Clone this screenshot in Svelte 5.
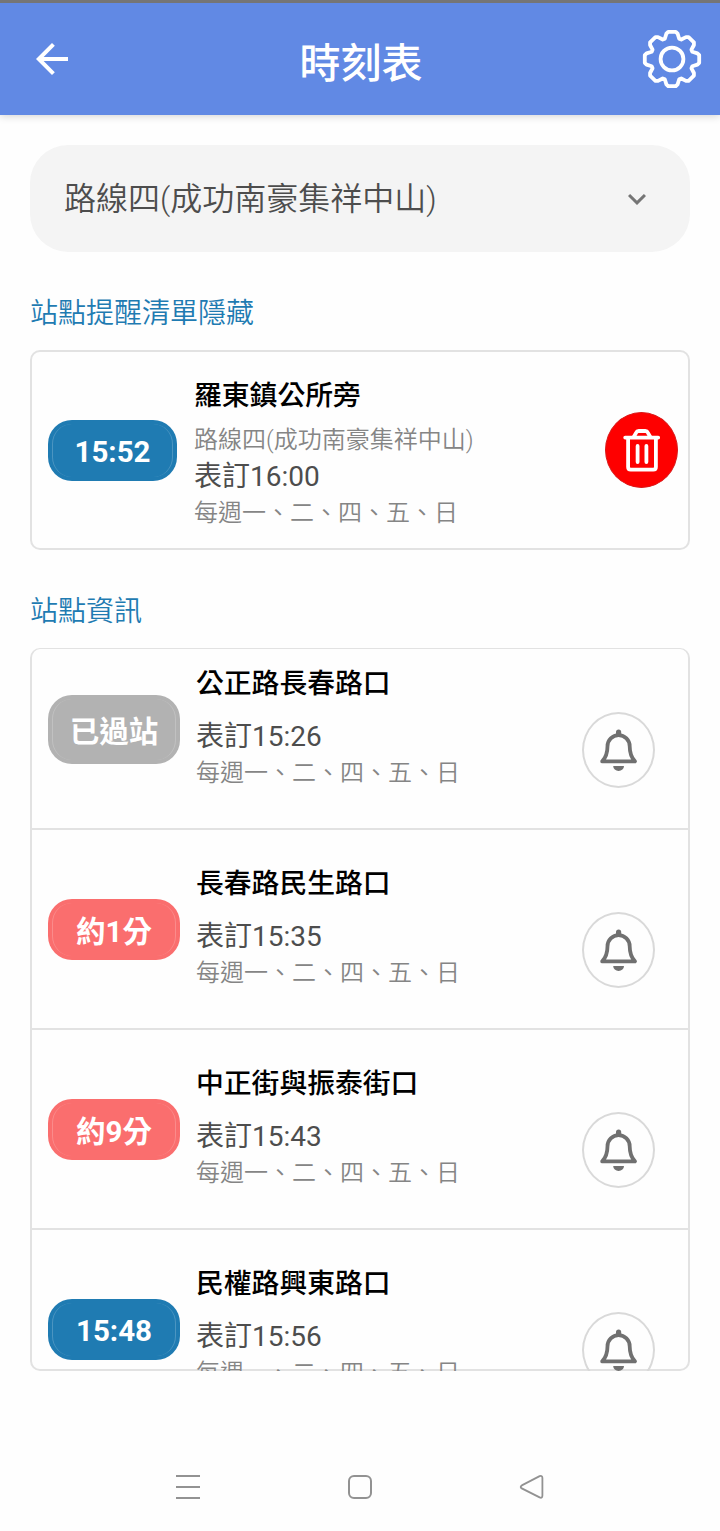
<script>
  let route = "路線四(成功南豪集祥中山)"
  const days = "每週一、二、四、五、日"

  let reminders = [
    { time: "15:52", name: "羅東鎮公所旁", route, scheduled: "16:00" }
  ]

  let stops = [
    { status: "已過站", kind: "passed", name: "公正路長春路口", scheduled: "15:26" },
    { status: "約1分", kind: "soon", name: "長春路民生路口", scheduled: "15:35" },
    { status: "約9分", kind: "soon", name: "中正街與振泰街口", scheduled: "15:43" },
    { status: "15:48", kind: "time", name: "民權路興東路口", scheduled: "15:56" }
  ]

  // eight teeth around the centre of a 60x60 box
  function gearPath() {
    const tooth = [[-7.2, -20.3], [-5.6, -25.4], [-3.8, -27.2], [3.8, -27.2], [5.6, -25.4], [7.2, -20.3]]
    let points = []
    for (let i = 0; i < 8; i++) {
      const a = (i * Math.PI) / 4
      for (const [x, y] of tooth) {
        const px = 30 + x * Math.cos(a) - y * Math.sin(a)
        const py = 30 + x * Math.sin(a) + y * Math.cos(a)
        points.push(px.toFixed(2) + " " + py.toFixed(2))
      }
    }
    return "M" + points.join("L") + "Z"
  }
</script>

<div class="screen">
  <header>
    <button class="back" aria-label="back">
      <svg width="48" height="48" viewBox="0 0 24 24"><path fill="#fff" d="M20 11H7.83l5.59-5.59L12 4l-8 8 8 8 1.41-1.41L7.83 13H20v-2z" /></svg>
    </button>
    <h1>時刻表</h1>
    <button class="settings" aria-label="settings">
      <svg width="60" height="60" viewBox="0 0 60 60" fill="none" stroke="#fff" stroke-width="3.8" stroke-linejoin="round">
        <path d={gearPath()} />
        <circle cx="30" cy="30" r="11.4" />
      </svg>
    </button>
  </header>

  <main>
    <button class="route-select">
      <span>{route}</span>
      <svg width="36" height="36" viewBox="0 0 24 24"><path fill="#757575" d="M7.41 8.59L12 13.17l4.59-4.58L18 10l-6 6-6-6z" /></svg>
    </button>

    <h2>站點提醒清單隱藏</h2>
    {#each reminders as item}
      <div class="card">
        <div class="pill time">{item.time}</div>
        <div class="info">
          <div class="name">{item.name}</div>
          <div class="small">{item.route}</div>
          <div class="scheduled">表訂{item.scheduled}</div>
          <div class="small">{days}</div>
        </div>
        <button class="round delete" aria-label="delete">
          <svg width="40" height="44" viewBox="0 0 40 44" fill="none" stroke="#fff" stroke-width="3.8" stroke-linecap="round" stroke-linejoin="round">
            <path d="M3.2 9.6H36.2M6.1 10V39Q6.1 41.6 8.7 41.6H31.3Q33.9 41.6 33.9 39V10" />
            <path d="M11.7 9L14.2 4.6Q14.9 3 16.7 3H23.3Q25.1 3 25.8 4.6L28.3 9" />
            <path d="M15.6 18V34M24.4 18V34" />
          </svg>
        </button>
      </div>
    {/each}

    <h2 class="second">站點資訊</h2>
    <div class="list">
      <div class="rows">
        {#each stops as stop}
          <div class="row">
            <div class="pill {stop.kind}">{stop.status}</div>
            <div class="info">
              <div class="name">{stop.name}</div>
              <div class="scheduled">表訂{stop.scheduled}</div>
              <div class="small">{days}</div>
            </div>
            <button class="round remind" aria-label="remind">
              <svg width="38" height="42" viewBox="0 0 38 42">
                <path fill="none" stroke="#707070" stroke-width="3.8" stroke-linejoin="round" d="M2.2 32.4C6.4 28 7.5 24 7.5 17.3A11.1 11.1 0 0 1 29.7 17.3C29.7 24 30.8 28 35 32.4Z" />
                <path fill="#707070" d="M16 6V3A2.6 2.6 0 0 1 21.2 3V6ZM13.2 37H24A5.4 5 0 0 1 13.2 37Z" />
              </svg>
            </button>
          </div>
        {/each}
      </div>
    </div>
  </main>

  <nav>
    <svg width="28" height="28" viewBox="0 0 28 28" stroke="#929292" stroke-width="2"><path d="M2 3H26M2 14H26M2 25H26" /></svg>
    <svg width="28" height="28" viewBox="0 0 28 28" fill="none" stroke="#929292" stroke-width="2"><rect x="3" y="3" width="22" height="22" rx="5" /></svg>
    <svg width="28" height="28" viewBox="0 0 28 28" fill="none" stroke="#929292" stroke-width="1.8"><path d="M3.8 12.4L21.6 3.2Q24.4 2.2 24.4 5V22.6Q24.4 25.6 21.6 24.4L3.8 15.4Q1.6 13.9 3.8 12.4Z" /></svg>
  </nav>
</div>

<style>
  :global(body) {
    margin: 0;
    background: #fefefe;
  }

  .screen {
    box-sizing: border-box;
    width: 720px;
    height: 1531px;
    display: flex;
    flex-direction: column;
    border-top: 3px solid #757575;
    background: #fefefe;
    font-family: Roboto, "Noto Sans CJK TC", sans-serif;
    overflow: hidden;
  }

  button {
    border: 0;
    padding: 0;
    background: none;
    font: inherit;
  }
  svg {
    display: block;
  }

  header {
    height: 112px;
    flex: none;
    display: grid;
    grid-template-columns: 1fr auto 1fr;
    align-items: center;
    padding: 0 18px 0 28px;
    background: #6189e4;
    box-shadow: 0 1px 8px rgba(0, 0, 0, .18);
  }
  .back {
    justify-self: start;
  }
  .settings {
    justify-self: end;
  }
  h1 {
    margin: 9px 0 0;
    padding-right: 8px;
    font-size: 41px;
    line-height: 60px;
    font-weight: 500;
    color: #fff;
  }

  main {
    flex: 1;
    padding: 30px 30px 0;
  }
  .route-select {
    width: 100%;
    height: 107px;
    display: flex;
    align-items: center;
    justify-content: space-between;
    padding: 0 35px 0 34px;
    border-radius: 38px;
    background: #f4f4f4;
    color: #4d4d4d;
    font-size: 32px;
    font-weight: 350;
  }
  .route-select span {
    padding-bottom: 5px;
  }

  h2 {
    margin: 42px 0 16px;
    font-size: 28px;
    line-height: 40px;
    font-weight: 350;
    color: #1f7bb2;
  }

  .card {
    box-sizing: border-box;
    height: 200px;
    display: flex;
    align-items: center;
    border: 2px solid #e2e2e2;
    border-radius: 10px;
    padding: 0 10px 0 16px;
  }
  .card .info {
    margin-left: 17px;
    padding-top: 24px;
  }
  .card .name {
    margin-bottom: 6px;
  }
  .card .scheduled {
    margin-top: 1px;
  }
  .card .pill {
    width: 129px;
  }

  .list {
    box-sizing: border-box;
    height: 723px;
    border: 2px solid #e2e2e2;
    border-top-width: 1px;
    border-radius: 10px;
    overflow: clip;
    overflow-clip-margin: border-box;
  }
  /* list is scrolled down a little */
  .rows {
    margin-top: -19px;
  }
  .row {
    box-sizing: border-box;
    height: 200px;
    display: flex;
    align-items: center;
    border-bottom: 2px solid #e2e2e2;
    padding: 0 33px 0 16px;
  }
  .row .info {
    margin-left: 16px;
    padding-top: 34px;
  }
  .row .name {
    margin-bottom: 15px;
  }

  .info {
    flex: 1;
    align-self: flex-start;
    white-space: nowrap;
  }
  .name {
    font-size: 27.8px;
    line-height: 40px;
    font-weight: 500;
    color: #000;
  }
  .scheduled {
    font-size: 28px;
    line-height: 36px;
    font-weight: 400;
    color: #4d4d4d;
  }
  .small {
    font-size: 24px;
    line-height: 36px;
    font-weight: 350;
    color: #858585;
  }

  .pill {
    position: relative;
    flex: none;
    box-sizing: border-box;
    width: 132px;
    height: 61px;
    display: flex;
    align-items: center;
    justify-content: center;
    border-radius: 24px;
    color: #fff;
    font-size: 29.5px;
    font-weight: 700;
  }
  .pill::after {
    content: "";
    position: absolute;
    inset: 4px;
    border: 0 solid rgba(255, 255, 255, .2);
    border-width: 0 1px;
    border-radius: 20px;
  }
  .time {
    padding-top: 3px;
    background: #1f7bb2;
  }
  .soon {
    background: #fa6e6e;
  }
  .passed {
    height: 69px;
    background: #b2b2b2;
  }

  .round {
    box-sizing: border-box;
    flex: none;
    width: 73px;
    height: 76px;
    border-radius: 50%;
    display: flex;
    align-items: center;
    justify-content: center;
  }
  .delete {
    background: #fe0000;
    border: 1px solid #d81818;
  }
  .remind {
    border: 2px solid #d9d9d9;
    margin-top: 42px;
  }

  nav {
    height: 88px;
    flex: none;
    display: flex;
    justify-content: space-between;
    align-items: center;
    padding: 0 174px;
  }
</style>
